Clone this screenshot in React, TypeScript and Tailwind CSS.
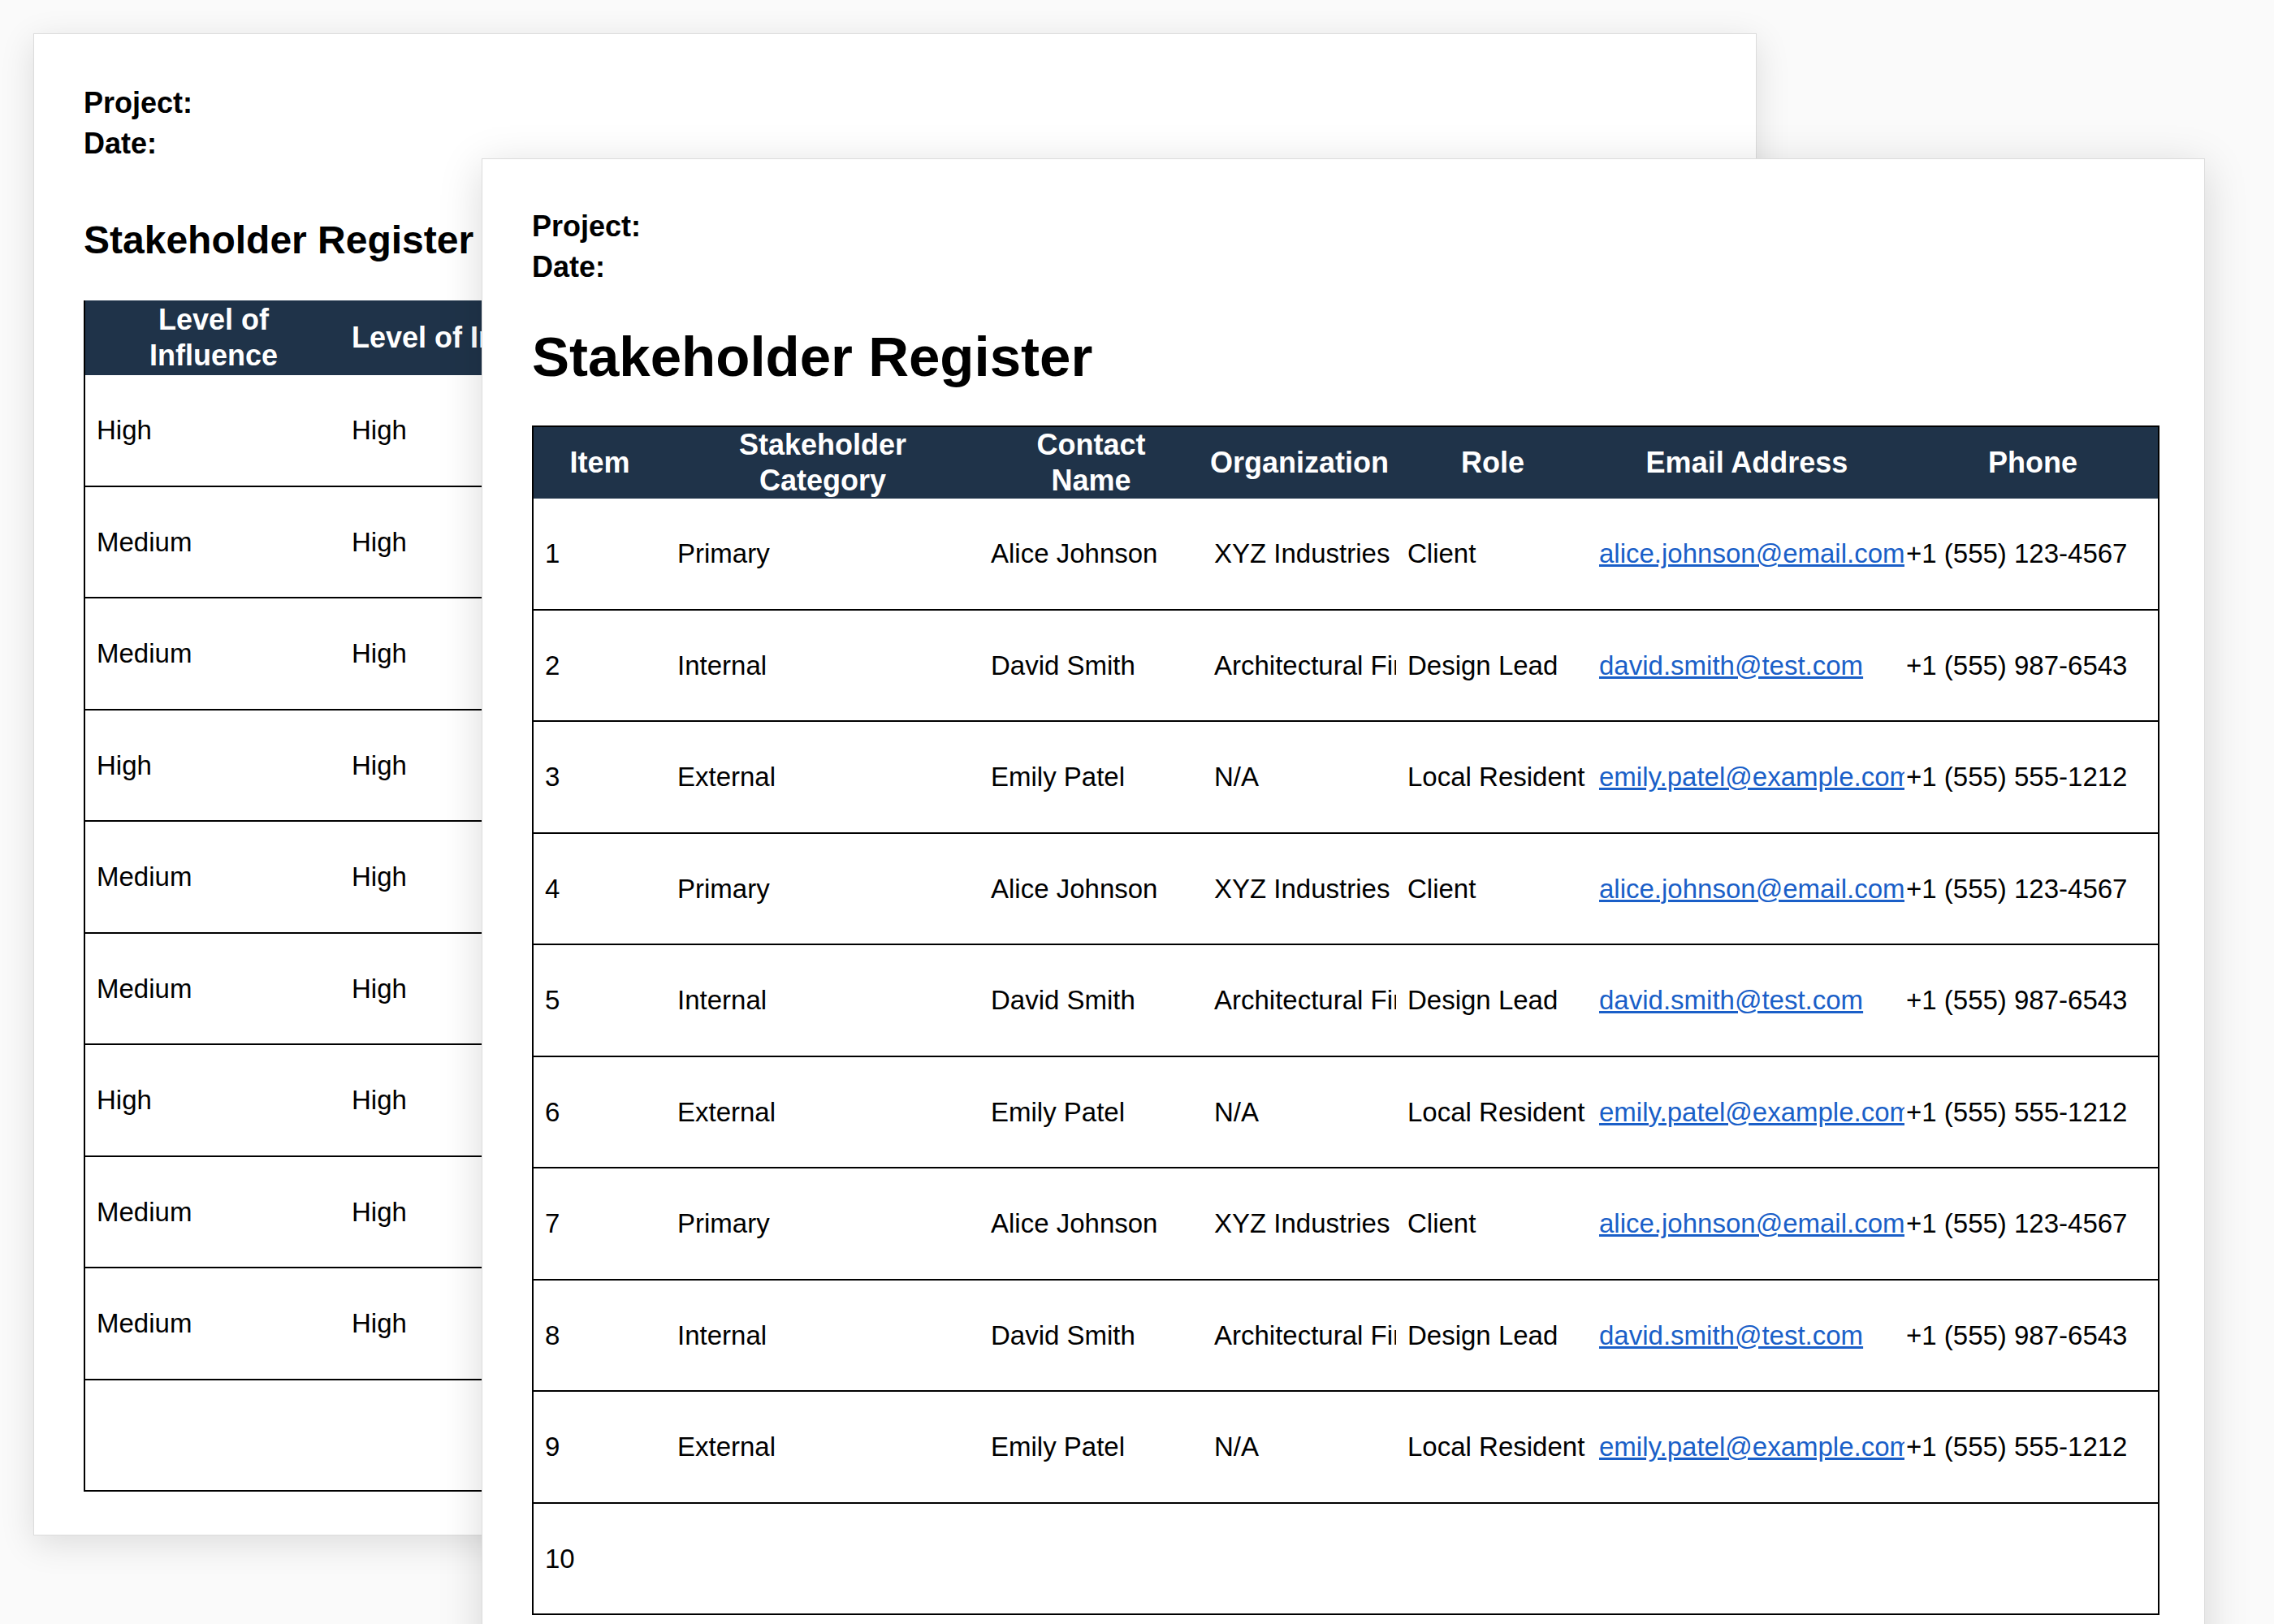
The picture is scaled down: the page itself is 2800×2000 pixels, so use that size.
import React from "react";

const rows = [
  ["Primary", "Alice Johnson", "XYZ Industries", "Client", "alice.johnson@email.com", "+1 (555) 123-4567"],
  ["Internal", "David Smith", "Architectural Firm", "Design Lead", "david.smith@test.com", "+1 (555) 987-6543"],
  ["External", "Emily Patel", "N/A", "Local Resident", "emily.patel@example.com", "+1 (555) 555-1212"],
];
const backRows = [
  ["High", "High"], ["Medium", "High"], ["Medium", "High"], ["High", "High"], ["Medium", "High"],
  ["Medium", "High"], ["High", "High"], ["Medium", "High"], ["Medium", "High"], ["", ""],
];
const widths = ["w-[163px]", "w-[386px]", "w-[275px]", "w-[238px]", "w-[238px]", "w-[388px]", "w-[316px]"];

export default function App() {
  return (
    <div className="relative w-[2800px] h-[2000px] overflow-hidden bg-[#fafafa] text-black" style={{ fontFamily: '"Liberation Sans", Arial, sans-serif' }}>
      {/* back page */}
      <div className="absolute left-[41px] top-[41px] w-[2122px] h-[1850px] bg-white border border-[#dcdcdc] shadow-[0_10px_40px_rgba(0,0,0,0.12)] pl-[61px] pt-[60px] overflow-hidden">
        <div className="font-bold text-[36px] leading-[50px]">Project:</div>
        <div className="font-bold text-[36px] leading-[50px]">Date:</div>
        <div className="font-bold text-[48px] leading-[60px] mt-[64px]">Stakeholder Register</div>
        <div className="mt-[44px] w-[1900px] border-l-2 border-black">
          <div className="flex h-[92px] bg-[#1f3349] text-white font-bold text-[36px] leading-[44px] items-center">
            <div className="w-[316px] text-center">Level of<br />Influence</div>
            <div className="w-[312px] pl-[12px]">Level of Interest</div>
            <div className="w-[400px] text-center">Engagement</div>
          </div>
          {backRows.map((r, i) => (
            <div key={i} className="flex h-[137.5px] items-center border-b-2 border-black text-[33px]">
              <div className="w-[316px] pl-[14px]">{r[0]}</div>
              <div className="w-[312px] pl-[12px]">{r[1]}</div>
            </div>
          ))}
        </div>
      </div>
      {/* front page */}
      <div className="absolute left-[593px] top-[195px] w-[2122px] h-[2100px] bg-white border border-[#dcdcdc] shadow-[0_10px_50px_rgba(0,0,0,0.15)] pl-[61px] pt-[58px]">
        <div className="font-bold text-[36px] leading-[50px]">Project:</div>
        <div className="font-bold text-[36px] leading-[50px]">Date:</div>
        <div className="font-bold text-[69px] leading-[80px] mt-[46px]">Stakeholder Register</div>
        <div className="mt-[44px] w-[2004px] border-x-2 border-black">
          <div className="flex h-[90px] bg-[#1f3349] text-white font-bold text-[36px] leading-[44px] items-center border-t-2 border-black">
            {["Item", "Stakeholder\nCategory", "Contact\nName", "Organization", "Role", "Email Address", "Phone"].map((h, i) => (
              <div key={i} className={`${widths[i]} shrink-0 text-center whitespace-pre-line`}>{h}</div>
            ))}
          </div>
          {Array.from({ length: 10 }).map((_, i) => {
            const r = i < 9 ? rows[i % 3] : null;
            return (
              <div key={i} className="flex h-[137.5px] items-center border-b-2 border-black text-[33px] whitespace-nowrap">
                <div className={`${widths[0]} shrink-0 pl-[14px]`}>{i + 1}</div>
                {r && r.map((c, j) => (
                  <div key={j} className={`${widths[j + 1]} shrink-0 overflow-hidden ${j === 4 ? "pl-[12px]" : j === 5 ? "pl-[2px]" : "pl-[14px]"}`}>
                    {j === 4 ? <span className="text-[#1a5fc8] underline">{c}</span> : c}
                  </div>
                ))}
              </div>
            );
          })}
        </div>
      </div>
    </div>
  );
}
